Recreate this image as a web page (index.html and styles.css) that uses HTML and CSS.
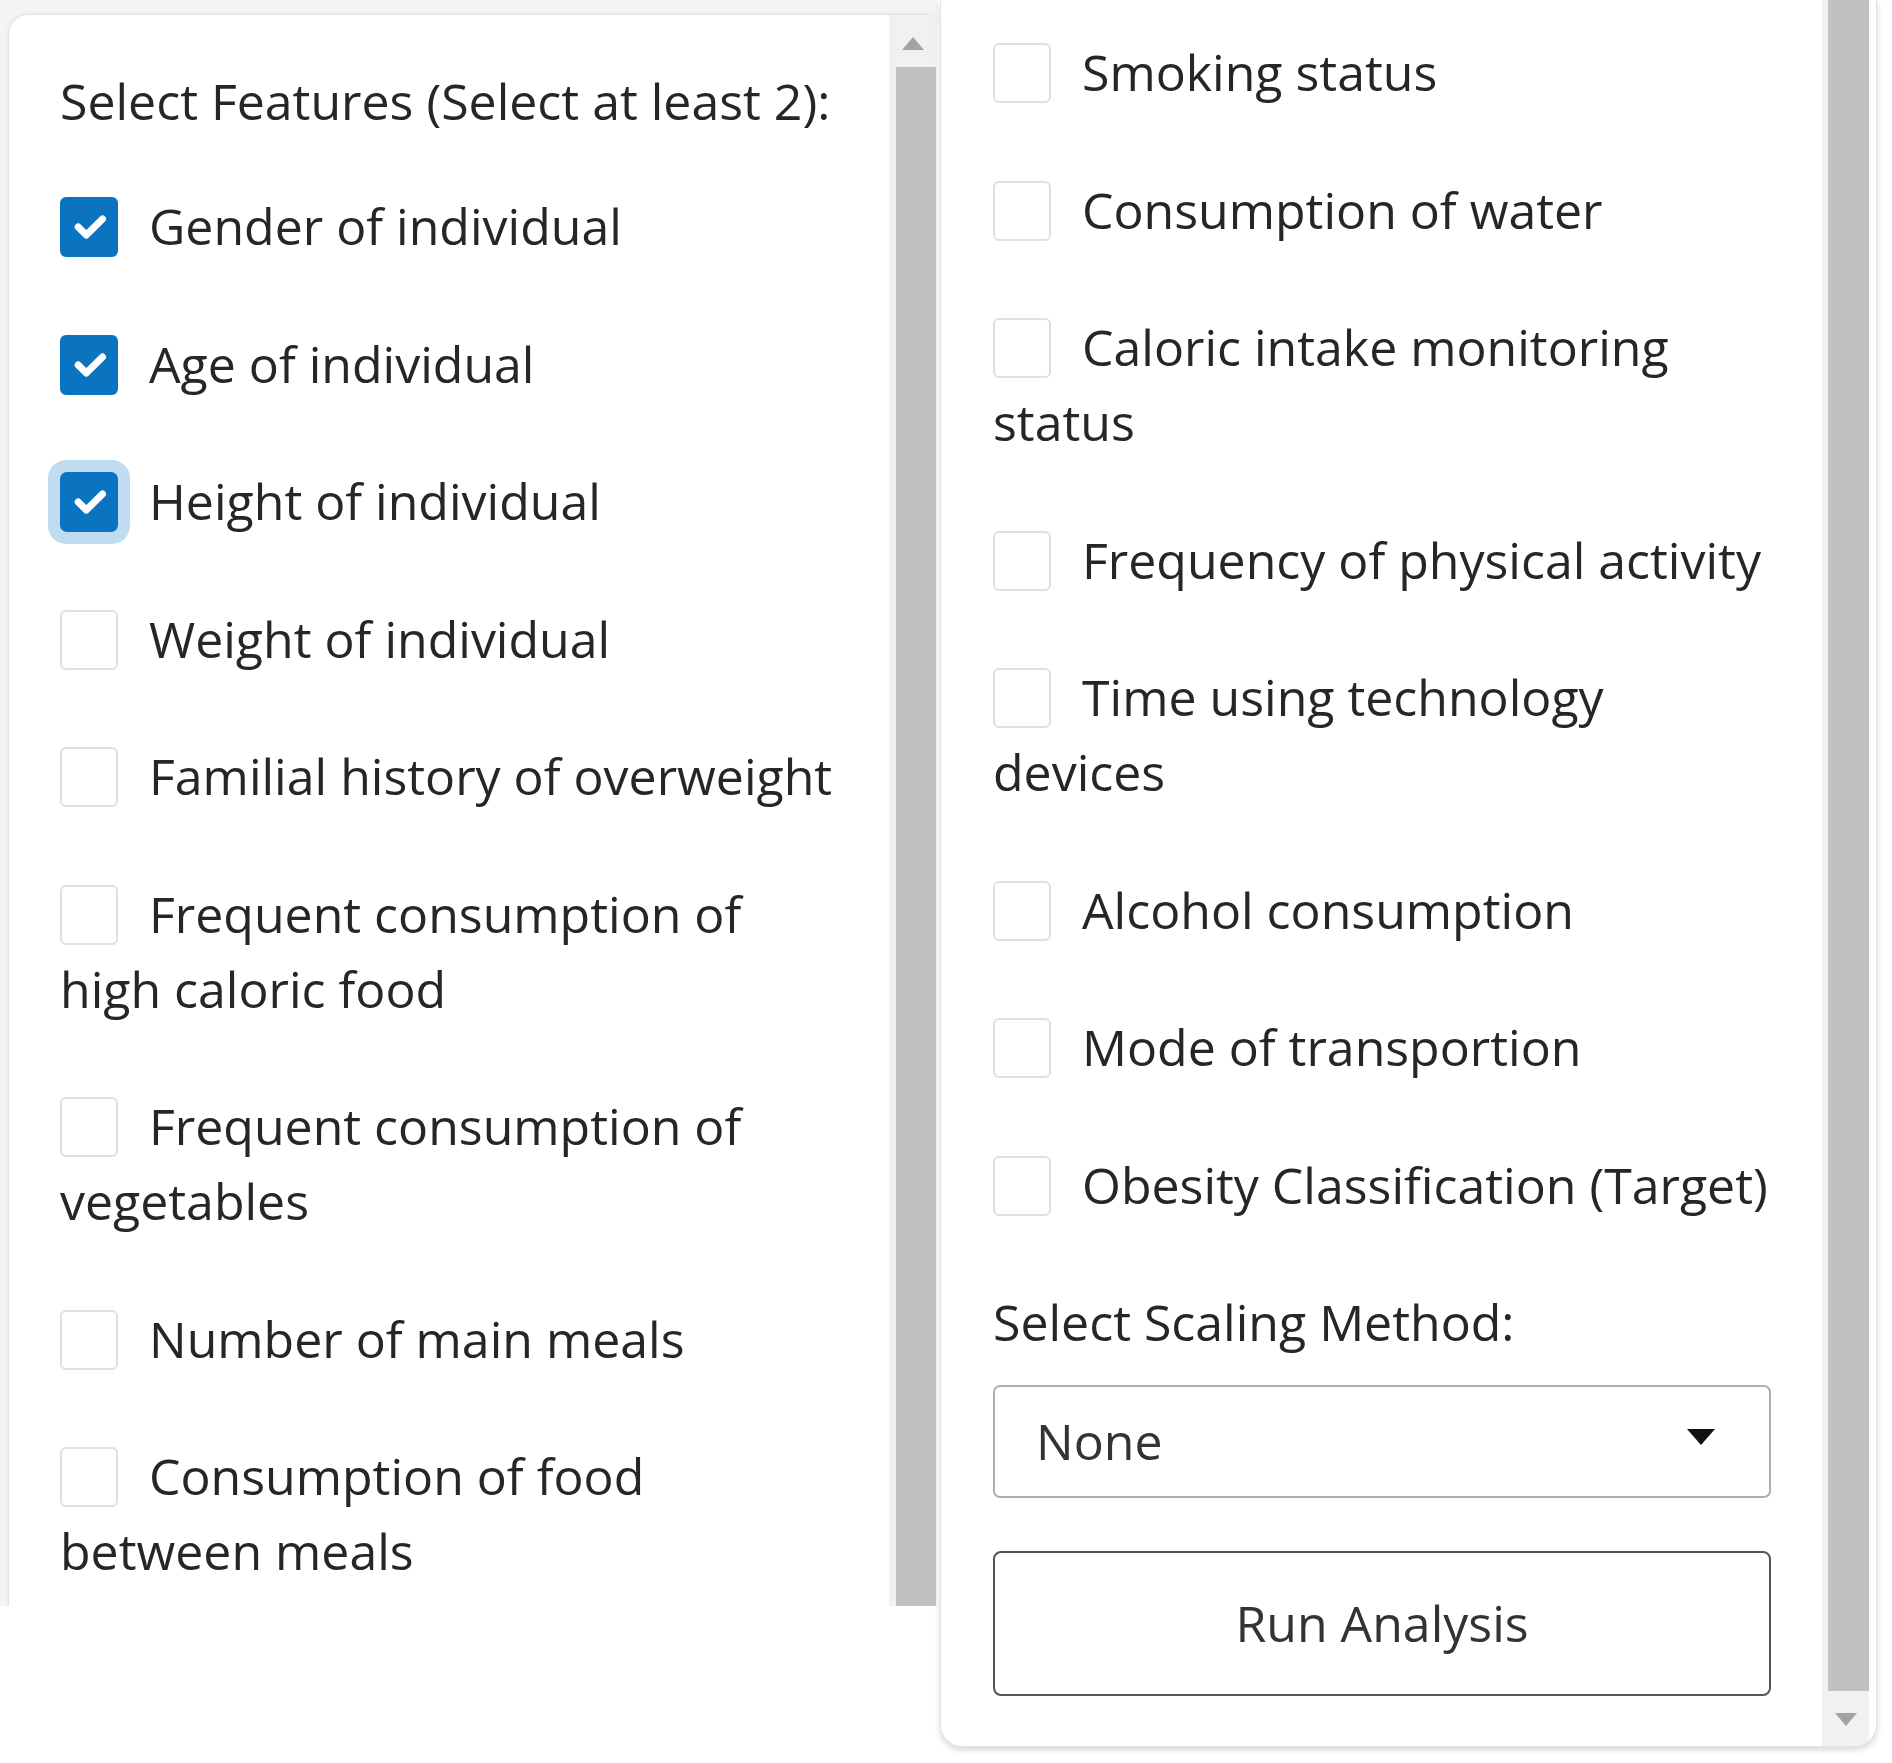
FILE: index.html
```html
<!DOCTYPE html>
<html lang="en">
<head>
<meta charset="utf-8">
<title>Feature selection</title>
<link rel="stylesheet" href="styles.css">
</head>
<body>
<div class="page">
  <section class="pane pane-left">
    <div class="card card-top">
      <div class="card-body">
        <div class="group-label">Select Features (Select at least 2):</div>
        <div class="options">
          <label class="opt"><span class="cb checked"><svg viewBox="0 0 20 20"><path d="M6 10l3 3l6-6"/></svg></span><span class="txt">Gender of individual</span></label>
          <label class="opt"><span class="cb checked"><svg viewBox="0 0 20 20"><path d="M6 10l3 3l6-6"/></svg></span><span class="txt">Age of individual</span></label>
          <label class="opt"><span class="cb checked focus"><svg viewBox="0 0 20 20"><path d="M6 10l3 3l6-6"/></svg></span><span class="txt">Height of individual</span></label>
          <label class="opt"><span class="cb"></span><span class="txt">Weight of individual</span></label>
          <label class="opt"><span class="cb"></span><span class="txt">Familial history of overweight</span></label>
          <label class="opt"><span class="cb"></span><span class="txt">Frequent consumption of high caloric food</span></label>
          <label class="opt"><span class="cb"></span><span class="txt">Frequent consumption of vegetables</span></label>
          <label class="opt"><span class="cb"></span><span class="txt">Number of main meals</span></label>
          <label class="opt"><span class="cb"></span><span class="txt">Consumption of food between meals</span></label>
        </div>
      </div>
      <div class="scrollbar">
        <div class="arrow arrow-up"></div>
        <div class="thumb thumb-top"></div>
      </div>
    </div>
  </section>
  <section class="pane pane-right">
    <div class="card card-bottom">
      <div class="card-body body-bottom">
        <div class="options">
          <label class="opt"><span class="cb"></span><span class="txt">Smoking status</span></label>
          <label class="opt"><span class="cb"></span><span class="txt">Consumption of water</span></label>
          <label class="opt"><span class="cb"></span><span class="txt">Caloric intake monitoring status</span></label>
          <label class="opt"><span class="cb"></span><span class="txt">Frequency of physical activity</span></label>
          <label class="opt"><span class="cb"></span><span class="txt">Time using technology devices</span></label>
          <label class="opt"><span class="cb"></span><span class="txt">Alcohol consumption</span></label>
          <label class="opt"><span class="cb"></span><span class="txt">Mode of transportion</span></label>
          <label class="opt"><span class="cb"></span><span class="txt">Obesity Classification (Target)</span></label>
        </div>
        <div class="field-label">Select Scaling Method:</div>
        <div class="select">
          <span class="select-value">None</span>
          <span class="caret"></span>
        </div>
        <button class="run-btn" type="button">Run Analysis</button>
      </div>
      <div class="scrollbar scrollbar-bottom">
        <div class="thumb thumb-bottom"></div>
        <div class="arrow arrow-down"></div>
      </div>
    </div>
  </section>
</div>
</body>
</html>
```

FILE: styles.css
```css
html, body {
  margin: 0;
  padding: 0;
  background: #ffffff;
}

body {
  font-family: "Open Sans", "Noto Sans", "Liberation Sans", sans-serif;
  font-size: 50px;
  line-height: 75px;
  color: #262626;
}

.page {
  display: flex;
  align-items: flex-start;
  width: 1892px;
}

.pane-left {
  width: 938px;
  height: 1606px;
  overflow: hidden;
  background: #f4f4f4;
  padding: 14px 0 0 8px;
  box-sizing: border-box;
}

.pane-right {
  width: 954px;
  padding: 0 15px 16px 2px;
  box-sizing: border-box;
}

.card {
  display: flex;
  background: #ffffff;
  border: 1px solid #e3e3e3;
  box-sizing: border-box;
}

.card-top {
  width: 930px;
  height: 1700px;
  border-right: none;
  border-radius: 20px 8px 0 0;
  box-shadow: 0 0 4px rgba(0, 0, 0, 0.06);
}

.card-bottom {
  width: 937px;
  border-top: none;
  border-radius: 0 0 22px 22px;
  box-shadow: 0 3px 6px rgba(0, 0, 0, 0.16);
  overflow: hidden;
}

.card-body {
  width: 778px;
  padding: 49px 51px 0 51px;
}

.body-bottom {
  padding: 35px 51px 50px 52px;
}

.group-label {
  margin-bottom: 50px;
}

.opt {
  display: block;
  margin-bottom: 62.5px;
}

.cb {
  display: inline-block;
  width: 58px;
  height: 60px;
  margin-right: 31px;
  vertical-align: -12px;
  border: 2px solid #dde1e6;
  border-radius: 6px;
  box-sizing: border-box;
  background: #ffffff;
}

.cb svg {
  display: block;
  width: 100%;
  height: 100%;
}

.cb svg path {
  fill: none;
  stroke: #ffffff;
  stroke-width: 2.6;
  stroke-linecap: round;
  stroke-linejoin: round;
}

.cb.checked {
  background: #0a74c1;
  border-color: #0a74c1;
}

.cb.focus {
  box-shadow: 0 0 0 12px #bfdcf0;
  border-radius: 7px;
}

.field-label {
  margin-top: 0;
}

.select {
  display: flex;
  align-items: center;
  justify-content: space-between;
  height: 113px;
  margin-top: 25px;
  padding: 0 54px 0 41px;
  border: 2px solid #a9aeb4;
  border-radius: 7px;
  box-sizing: border-box;
  color: #333333;
}

.caret {
  width: 0;
  height: 0;
  border-left: 14px solid transparent;
  border-right: 14px solid transparent;
  border-top: 16px solid #111111;
  margin-top: -10px;
}

.run-btn {
  display: block;
  width: 100%;
  height: 145px;
  margin-top: 53px;
  padding: 0;
  background: #ffffff;
  border: 2px solid #555555;
  border-radius: 8px;
  font: inherit;
  color: #333333;
}

.scrollbar {
  width: 48px;
  flex: none;
  background: #f1f1f1;
  display: flex;
  flex-direction: column;
  align-items: center;
}

.scrollbar-bottom {
  width: 47px;
  margin-right: 6px;
}

.thumb {
  width: 40px;
  margin-left: 7px;
  align-self: flex-start;
  background: #c1c1c1;
}

.thumb-top {
  flex: 1;
  margin-top: 17px;
}

.thumb-bottom {
  flex: 1;
  width: 41px;
  margin-left: 6px;
}

.arrow {
  width: 0;
  height: 0;
  border-left: 11px solid transparent;
  border-right: 11px solid transparent;
}

.arrow-up {
  margin-top: 22px;
  border-bottom: 13px solid #a3a3a3;
}

.arrow-down {
  margin-top: 22px;
  margin-bottom: 20px;
  border-top: 13px solid #a3a3a3;
}
```
